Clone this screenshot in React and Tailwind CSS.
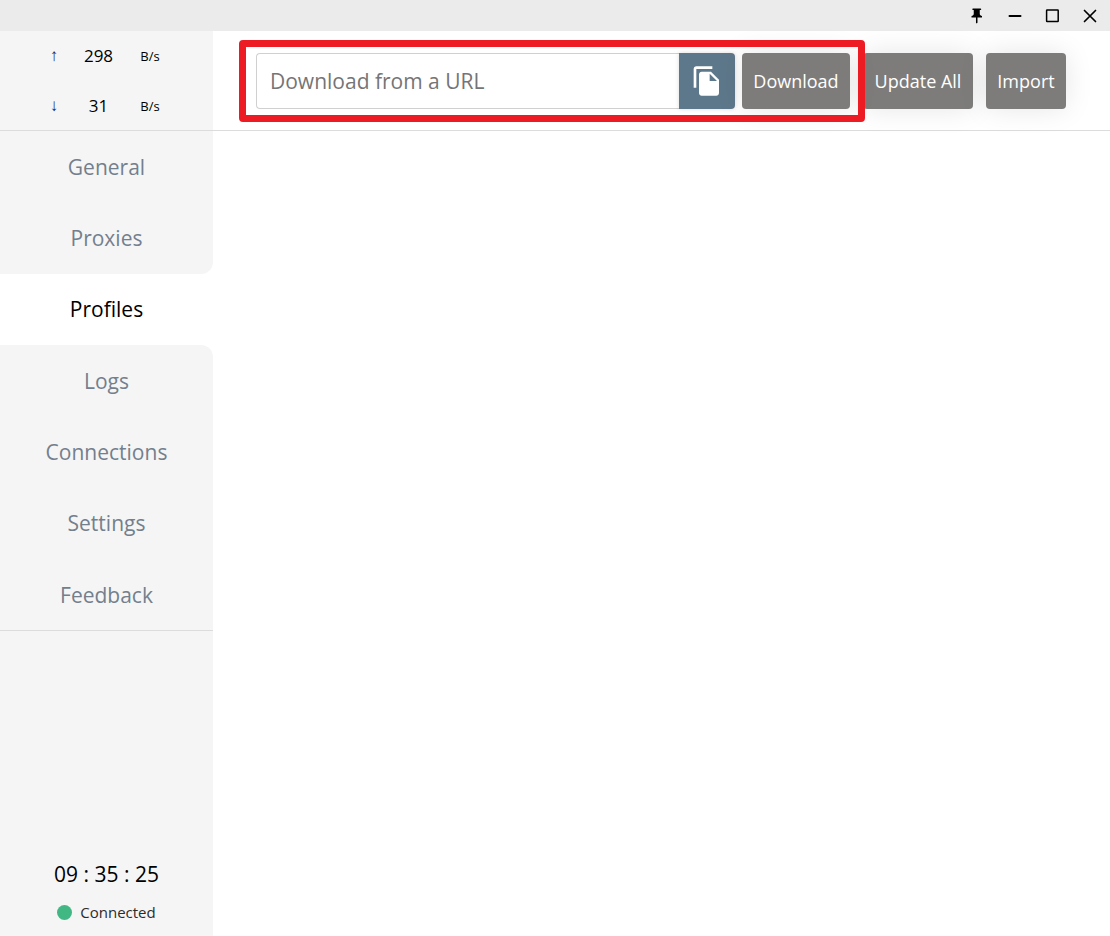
const NAV_ITEMS = [
  { label: "General" },
  { label: "Proxies", corner: "rounded-br-xl" },
  { label: "Profiles", active: true },
  { label: "Logs", corner: "rounded-tr-xl" },
  { label: "Connections" },
  { label: "Settings" },
  { label: "Feedback" },
];

function TitleBar() {
  return (
    <header className="flex h-[31px] shrink-0 items-center justify-end bg-[#ebebeb] pr-3 text-black">
      <div className="flex items-center gap-[22px]">
        <button type="button" aria-label="Pin window" className="flex size-4 items-center justify-center">
          <svg viewBox="0 0 24 24" className="size-[18px] shrink-0" fill="currentColor">
            <path d="M17 9V4h1c.55 0 1-.45 1-1s-.45-1-1-1H8c-.55 0-1 .45-1 1s.45 1 1 1h1v5c0 1.66-1.34 3-3 3v2h5.97v7l1 1 1-1v-7H20v-2c-1.66 0-3-1.34-3-3z" />
          </svg>
        </button>
        <button type="button" aria-label="Minimize" className="flex size-4 items-center justify-center">
          <svg viewBox="0 0 16 16" className="size-4" fill="none" stroke="currentColor" strokeWidth="2">
            <path d="M3.5 8h11" strokeLinecap="round" />
          </svg>
        </button>
        <button type="button" aria-label="Maximize" className="flex size-4 items-center justify-center">
          <svg viewBox="0 0 16 16" className="size-4" fill="none" stroke="currentColor" strokeWidth="1.5">
            <rect x="2.6" y="2" width="11.6" height="11.6" rx="0.5" />
          </svg>
        </button>
        <button type="button" aria-label="Close" className="flex size-4 items-center justify-center">
          <svg viewBox="0 0 16 16" className="size-4" fill="none" stroke="currentColor" strokeWidth="1.7">
            <path d="M2.5 2.5l11 11M13.5 2.5l-11 11" strokeLinecap="round" />
          </svg>
        </button>
      </div>
    </header>
  );
}

function TrafficRow({ arrow, value }) {
  return (
    <div className="flex h-[50px] items-center pl-[46px]">
      <span className="w-4 text-center font-['Liberation_Sans',sans-serif] text-[17px] text-[#24245a]">{arrow}</span>
      <span className="w-[73px] text-center text-[17px]">{value}</span>
      <span className="w-[30px] pt-0.5 text-center text-[13px]">B/s</span>
    </div>
  );
}

function Sidebar() {
  return (
    <aside className="flex w-[213px] shrink-0 flex-col bg-white text-black">
      <div className="h-[100px] border-b border-[#dcdcdc] bg-[#f5f5f5]">
        <TrafficRow arrow="↑" value="298" />
        <TrafficRow arrow="↓" value="31" />
      </div>
      <nav className="flex h-[500px] flex-col border-b border-[#dcdcdc]">
        {NAV_ITEMS.map(({ label, active, corner = "" }) => (
          <a
            key={label}
            href={"#" + label.toLowerCase()}
            aria-current={active ? "page" : undefined}
            className={`flex flex-1 items-center justify-center pt-0.5 text-[21px] ${corner} ${
              active ? "bg-white text-black" : "bg-[#f5f5f5] text-[#737f8d]"
            }`}
          >
            {label}
          </a>
        ))}
      </nav>
      <div className="flex grow flex-col items-center justify-end bg-[#f5f5f5] pb-3">
        <time className="text-[21px] leading-8">09 : 35 : 25</time>
        <div className="mt-2.5 flex items-center gap-2 text-[15px] leading-6 text-[#2c2c2c]">
          <span className="size-[15px] rounded-full bg-[#41b883]" />
          Connected
        </div>
      </div>
    </aside>
  );
}

function ActionButton({ children, className }) {
  return (
    <button
      type="button"
      className={`h-14 shrink-0 rounded-sm bg-[#7e7c7a] pt-0.5 text-center text-[18px] whitespace-nowrap text-white shadow-[0_0_28px_rgba(0,0,0,0.1)] ${className}`}
    >
      {children}
    </button>
  );
}

function Toolbar() {
  return (
    <div className="flex h-[100px] items-center gap-[13px] border-b border-[#dcdcdc] pr-11 pl-[43px]">
      <div className="relative z-10 flex min-w-0 flex-1 items-center gap-[7px]">
        <div className="flex h-14 min-w-0 flex-1">
          <input
            type="text"
            aria-label="Download from a URL"
            placeholder="Download from a URL"
            className="min-w-0 flex-1 rounded-l-sm border border-r-0 border-[#d0d0d0] bg-white px-[13px] pt-0.5 text-[21px] text-black outline-none placeholder:text-[#757575]"
          />
          <button
            type="button"
            aria-label="Paste"
            className="flex w-14 shrink-0 items-center justify-center rounded-r-sm bg-[#5e788b] text-white shadow-[0_0_4px_rgba(0,0,0,0.15)]"
          >
            <svg viewBox="0 0 24 24" className="size-8" fill="currentColor">
              <path d="M16 1H4c-1.1 0-2 .9-2 2v14h2V3h12V1zm-1 4l6 6v10c0 1.1-.9 2-2 2H7.99C6.89 23 6 22.1 6 21l.01-14c0-1.1.89-2 1.99-2h7zm-1 7h5.5L14 6.5V12z" />
            </svg>
          </button>
        </div>
        <ActionButton className="w-[108px]">Download</ActionButton>
        <div className="pointer-events-none absolute -top-[13px] -right-[15px] -bottom-[13px] -left-[17px] rounded border-[7px] border-[#ed1c24]" />
      </div>
      <ActionButton className="w-[110px]">Update All</ActionButton>
      <ActionButton className="w-20">Import</ActionButton>
    </div>
  );
}

export default function App() {
  return (
    <div className="flex min-h-screen flex-col bg-white font-['Open_Sans','Noto_Sans',sans-serif]">
      <TitleBar />
      <div className="flex grow">
        <Sidebar />
        <main className="min-w-0 flex-1 bg-white">
          <Toolbar />
        </main>
      </div>
    </div>
  );
}
